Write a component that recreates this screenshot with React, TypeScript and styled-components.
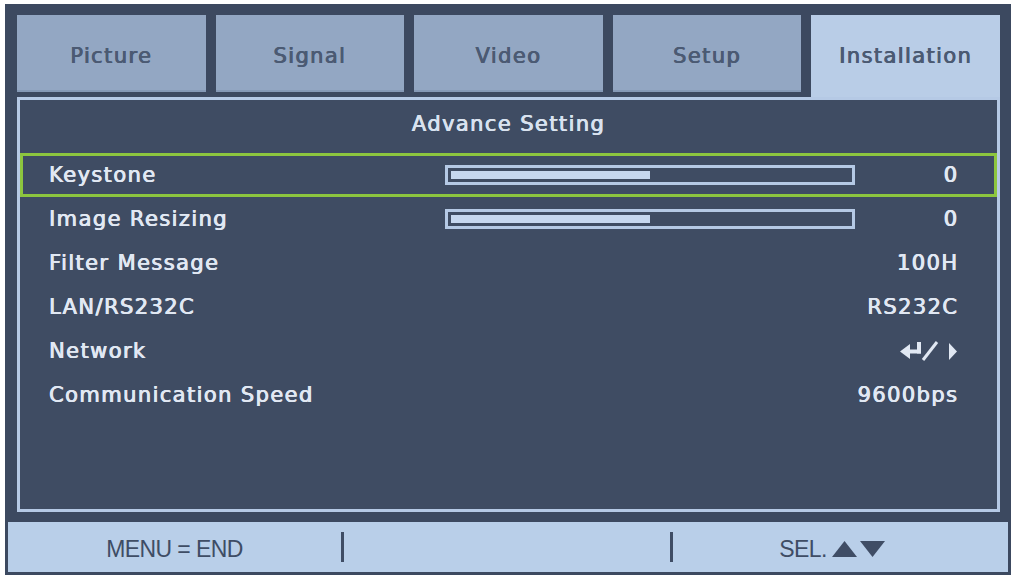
import styled, { createGlobalStyle } from 'styled-components';

const GlobalStyle = createGlobalStyle`
  html, body {
    margin: 0;
    padding: 0;
    background: #ffffff;
  }
  body {
    font-family: 'DejaVu Sans', Verdana, sans-serif;
  }
`;

const colors = {
  frame: '#3c4960',
  panel: '#3f4c63',
  tab: '#93a7c3',
  tabText: '#4b5a73',
  tabActive: '#b9cde7',
  line: '#b5c9e5',
  text: '#e1e8f3',
  green: '#8dc63f',
  bar: '#b9cfe9',
  barText: '#3f4d65',
};

// the OSD font is a little heavier than DejaVu Book, a lot lighter than Bold
const osdText = (c: string) => `
  font-size: 21px;
  font-weight: normal;
  letter-spacing: 1.4px;
  text-shadow: 0.5px 0 0 ${c}, -0.3px 0 0 ${c};
`;

const Frame = styled.div`
  margin: 4px 0 0 5px;
  width: 1006px;
  box-sizing: border-box;
  padding: 3px;
  background: ${colors.frame};
`;

const TopArea = styled.div`
  padding: 8px 8px 10px 9px;
`;

const TabRow = styled.div`
  display: grid;
  grid-template-columns: repeat(5, 1fr);
  column-gap: 10px;
  height: 82px;
  align-items: start;
`;

const Tab = styled.div<{ $active?: boolean }>`
  height: ${(p) => (p.$active ? '82px' : '77px')};
  box-sizing: border-box;
  padding-top: 29px;
  text-align: center;
  line-height: 24px;
  ${osdText(colors.tabText)}
  color: ${colors.tabText};
  background: ${(p) => (p.$active ? colors.tabActive : colors.tab)};
  box-shadow: ${(p) => (p.$active ? 'none' : 'inset 0 -2px 0 #8599b6')};
`;

const Panel = styled.div`
  height: 415px;
  box-sizing: border-box;
  border: 3px solid ${colors.line};
  background: ${colors.panel};
`;

const PanelTitle = styled.div`
  height: 48px;
  display: flex;
  align-items: center;
  justify-content: center;
  ${osdText('#d9e2ef')}
  color: #d9e2ef;
`;

const RowList = styled.div`
  padding-top: 5px;
`;

const Row = styled.div<{ $selected?: boolean }>`
  height: 44px;
  box-sizing: border-box;
  border: 3px solid ${(p) => (p.$selected ? colors.green : 'transparent')};
  padding: 0 37px 0 26px;
  display: grid;
  grid-template-columns: 396px 410px 1fr;
  align-items: center;
  ${osdText(colors.text)}
  color: ${colors.text};
`;

const Label = styled.span`
  white-space: nowrap;
`;

const Value = styled.span`
  grid-column: 3;
  justify-self: end;
  white-space: nowrap;
  display: flex;
  align-items: center;
  margin-right: -1.4px;
`;

const Bar = styled.div`
  grid-column: 2;
  height: 20px;
  box-sizing: border-box;
  border: 3px solid ${colors.line};
  padding: 3px;
`;

const BarFill = styled.div`
  height: 8px;
  background: #c6d7ef;
`;

const BottomBar = styled.div`
  height: 50px;
  display: grid;
  grid-template-columns: 333px 3px 326px 3px 1fr;
  align-items: center;
  background: ${colors.bar};
  font-family: 'Liberation Sans', Arial, sans-serif;
  font-size: 23px;
  color: ${colors.barText};
`;

const Hint = styled.div<{ $shift?: number }>`
  display: flex;
  align-items: center;
  justify-content: center;
  gap: 5px;
  padding-top: 4px;
  padding-right: ${(p) => p.$shift ?? 0}px;
  letter-spacing: -0.6px;
`;

const Divider = styled.div`
  width: 3px;
  height: 30px;
  background: ${colors.barText};
`;

const NetworkIcon = () => (
  <svg width="58" height="20" viewBox="0 0 58 20" fill={colors.text}>
    <polygon points="0,10.5 10,3 10,18" />
    <rect x="9" y="8.5" width="12" height="4" />
    <rect x="17" y="1" width="4" height="11.5" />
    <line x1="23" y1="19" x2="37" y2="1" stroke={colors.text} strokeWidth="3" />
    <polygon points="49,2 57,10.5 49,19" />
  </svg>
);

const Arrows = () => (
  <svg width="54" height="18" viewBox="0 0 54 18" fill={colors.barText}>
    <polygon points="0,17 12.5,1 25,17" />
    <polygon points="28,1 53,1 40.5,17" />
  </svg>
);

const tabs = ['Picture', 'Signal', 'Video', 'Setup', 'Installation'];

const rows: { label: string; slider?: number; value: React.ReactNode }[] = [
  { label: 'Keystone', slider: 50, value: '0' },
  { label: 'Image Resizing', slider: 50, value: '0' },
  { label: 'Filter Message', value: '100H' },
  { label: 'LAN/RS232C', value: 'RS232C' },
  { label: 'Network', value: <NetworkIcon /> },
  { label: 'Communication Speed', value: '9600bps' },
];

export default function App() {
  return (
    <>
      <GlobalStyle />
      <Frame>
        <TopArea>
          <TabRow>
            {tabs.map((t) => (
              <Tab key={t} $active={t === 'Installation'}>
                {t}
              </Tab>
            ))}
          </TabRow>
          <Panel>
            <PanelTitle>Advance Setting</PanelTitle>
            <RowList>
              {rows.map((r, i) => (
                <Row key={r.label} $selected={i === 0}>
                  <Label>{r.label}</Label>
                  {r.slider !== undefined && (
                    <Bar>
                      <BarFill style={{ width: `${r.slider}%` }} />
                    </Bar>
                  )}
                  <Value>{r.value}</Value>
                </Row>
              ))}
            </RowList>
          </Panel>
        </TopArea>
        <BottomBar>
          <Hint>MENU = END</Hint>
          <Divider />
          <Hint />
          <Divider />
          <Hint $shift={16}>
            SEL. <Arrows />
          </Hint>
        </BottomBar>
      </Frame>
    </>
  );
}
